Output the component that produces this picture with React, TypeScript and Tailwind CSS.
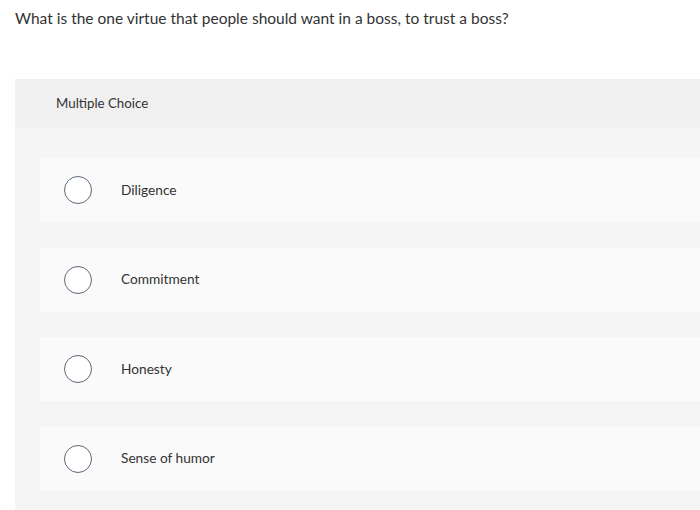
import React from "react";

const options = ["Diligence", "Commitment", "Honesty", "Sense of humor"];

export default function App() {
  return (
    <div
      className="w-[700px] h-[510px] overflow-hidden bg-white text-[#333333]"
      style={{ fontFamily: "Lato, 'Open Sans', 'Liberation Sans', sans-serif" }}
    >
      <p className="pl-[15px] pt-[8px] text-[15.5px] leading-[20px] text-[#333333]">
        What is the one virtue that people should want in a boss, to trust a boss?
      </p>
      <div className="ml-[15px] mt-[51px]">
        <div className="h-[49px] bg-[#f0f0f0] pl-[41px] flex items-center text-[13.3px] text-[#333333]">
          Multiple Choice
        </div>
        <div className="bg-[#f5f5f5] pl-[25px] pt-[30px] pb-[30px] flex flex-col gap-[25.5px]">
          {options.map((o) => (
            <div key={o} className="h-[64px] bg-[#fafafa] flex items-center pl-[24px]">
              <div className="w-[28px] h-[28px] rounded-full border-[1.5px] border-[#5b6877] bg-white shrink-0" />
              <span className="ml-[29px] text-[13.7px] text-[#333333]">{o}</span>
            </div>
          ))}
        </div>
      </div>
    </div>
  );
}
